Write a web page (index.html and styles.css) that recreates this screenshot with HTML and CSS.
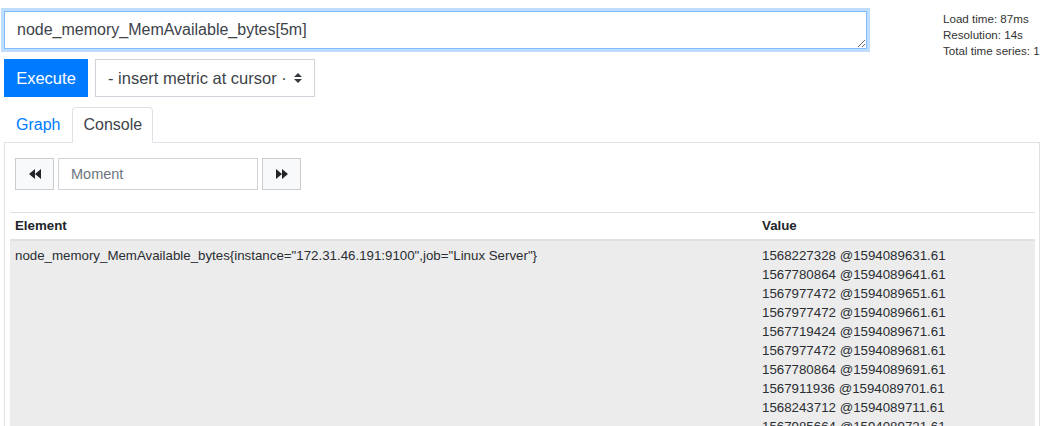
FILE: index.html
```html
<!DOCTYPE html>
<html>
<head>
<meta charset="utf-8">
<link rel="stylesheet" href="styles.css">
</head>
<body>
<div class="page">
  <div class="query-row">
    <textarea class="expr" rows="1" spellcheck="false">node_memory_MemAvailable_bytes[5m]</textarea>
    <div class="stats">
      <div>Load time: 87ms</div>
      <div>Resolution: 14s</div>
      <div>Total time series: 1</div>
    </div>
  </div>
  <div class="action-row">
    <button class="btn-exec">Execute</button>
    <div class="metric-select">
      <span class="select-text">- insert metric at cursor ·</span>
      <svg class="carets" width="8" height="10" viewBox="0 0 4 5"><path d="M2 0L0 2h4zm0 5L0 3h4z" fill="#343a40"/></svg>
    </div>
  </div>
  <div class="tabs">
    <a class="tab">Graph</a>
    <a class="tab active">Console</a>
  </div>
  <div class="panel">
    <div class="controls">
      <button class="btn-nav" aria-label="back">
        <svg width="12" height="10" viewBox="0 0 12 10"><path d="M6 0L0 5l6 5zM12 0L6 5l6 5z" fill="#212529"/></svg>
      </button>
      <input class="moment" placeholder="Moment">
      <button class="btn-nav" aria-label="forward">
        <svg width="12" height="10" viewBox="0 0 12 10"><path d="M0 0l6 5-6 5zM6 0l6 5-6 5z" fill="#212529"/></svg>
      </button>
    </div>
    <table class="results">
      <thead>
        <tr><th class="col-el">Element</th><th>Value</th></tr>
      </thead>
      <tbody>
        <tr>
          <td>node_memory_MemAvailable_bytes{instance="172.31.46.191:9100",job="Linux Server"}</td>
          <td class="values">
            <div>1568227328 @1594089631.61</div>
            <div>1567780864 @1594089641.61</div>
            <div>1567977472 @1594089651.61</div>
            <div>1567977472 @1594089661.61</div>
            <div>1567719424 @1594089671.61</div>
            <div>1567977472 @1594089681.61</div>
            <div>1567780864 @1594089691.61</div>
            <div>1567911936 @1594089701.61</div>
            <div>1568243712 @1594089711.61</div>
            <div>1567985664 @1594089721.61</div>
            <div>1567985664 @1594089731.61</div>
          </td>
        </tr>
      </tbody>
    </table>
  </div>
</div>
</body>
</html>
```

FILE: styles.css
```css
* { box-sizing: border-box; }
html, body { margin: 0; padding: 0; background: #fff; }
body {
  font-family: "Liberation Sans", Arial, sans-serif;
  color: #212529;
  overflow: hidden;
}
.page { padding: 11px 2px 0 4px; }

.query-row {
  display: flex;
  align-items: flex-start;
  justify-content: space-between;
  height: 38px;
}
.expr {
  width: 863px;
  height: 38px;
  padding: 6px 12px;
  font-family: "Liberation Sans", Arial, sans-serif;
  font-size: 16px;
  line-height: 24px;
  color: #3d4349;
  border: 1px solid #80bdff;
  border-radius: 0;
  box-shadow: 0 0 0 3px rgba(0, 123, 255, 0.25);
  outline: none;
  resize: vertical;
  overflow: hidden;
  display: block;
  margin: 0;
}
.stats {
  width: 97px;
  font-size: 11.6px;
  line-height: 16px;
  color: #333;
  white-space: nowrap;
}

.action-row {
  display: flex;
  gap: 7px;
  margin-top: 10px;
}
.btn-exec {
  width: 84px;
  height: 38px;
  background: #007bff;
  color: #fff;
  border: 1px solid #007bff;
  border-radius: 0;
  font-family: "Liberation Sans", Arial, sans-serif;
  font-size: 16.5px;
  padding: 0;
}
.metric-select {
  width: 220px;
  height: 38px;
  border: 1px solid #ced4da;
  display: flex;
  align-items: center;
  padding: 0 12px;
  color: #3d4349;
  font-size: 16.5px;
}
.select-text { flex: 1; white-space: nowrap; overflow: hidden; }
.carets { flex: none; margin-left: 4px; }

.tabs {
  display: flex;
  margin-top: 10px;
  border-bottom: 1px solid #dee2e6;
  height: 36px;
}
.tab {
  display: block;
  padding: 5px 11px;
  font-size: 16px;
  line-height: 24px;
  color: #007bff;
  border: 1px solid transparent;
  border-radius: 4px 4px 0 0;
  margin-bottom: -1px;
}
.tab.active {
  color: #3d4349;
  background: #fff;
  border-color: #dee2e6 #dee2e6 #fff;
  padding: 5px 10px;
}

.panel {
  border: 1px solid #dee2e6;
  border-top: none;
  padding: 15px 4px 0 5px;
  height: 300px;
}
.controls {
  display: flex;
  gap: 4px;
  margin-left: 5px;
  height: 32px;
}
.btn-nav {
  width: 39px;
  height: 32px;
  background: #f8f9fa;
  border: 1px solid #ccc;
  border-radius: 0;
  display: flex;
  align-items: center;
  justify-content: center;
  padding: 0;
}
.moment {
  width: 200px;
  height: 32px;
  border: 1px solid #ced4da;
  border-radius: 0;
  padding: 0 12px;
  font-family: "Liberation Sans", Arial, sans-serif;
  font-size: 14.5px;
  color: #495057;
  outline: none;
}
.moment::placeholder { color: #6c757d; }

.results {
  margin-top: 22px;
  width: 100%;
  border-collapse: collapse;
  font-size: 13.3px;
}
.results th {
  text-align: left;
  font-weight: bold;
  padding: 5px;
  line-height: 16px;
  border-top: 1px solid #dee2e6;
  border-bottom: 2px solid #dee2e6;
}
.results th.col-el { width: 747px; }
.results td {
  background: #ececec;
  padding: 5px;
  line-height: 19px;
  vertical-align: top;
  color: #2a2e33;
}
```
